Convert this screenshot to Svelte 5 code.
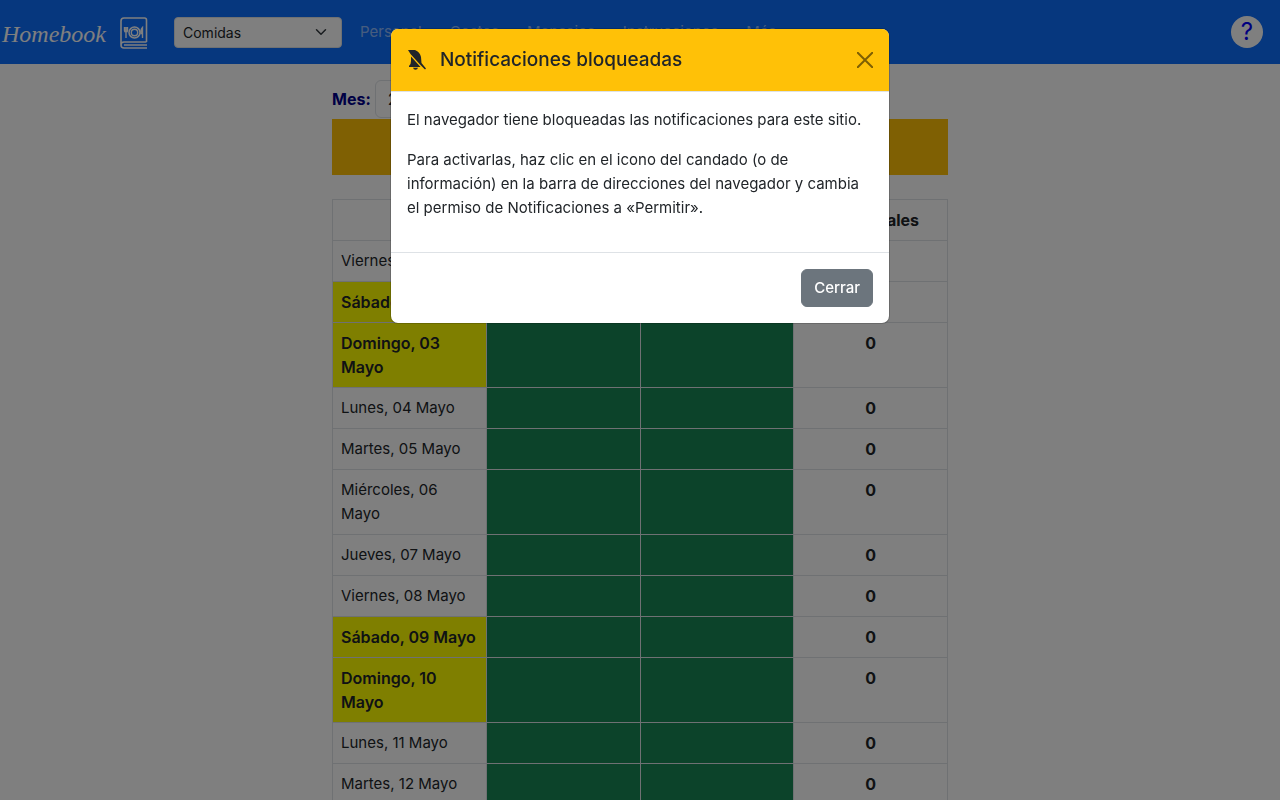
<script>
  const rows = [
    ['Viernes, 01 Mayo', false],
    ['Sábado, 02 Mayo', true],
    ['Domingo, 03 Mayo', true],
    ['Lunes, 04 Mayo', false],
    ['Martes, 05 Mayo', false],
    ['Miércoles, 06 Mayo', false],
    ['Jueves, 07 Mayo', false],
    ['Viernes, 08 Mayo', false],
    ['Sábado, 09 Mayo', true],
    ['Domingo, 10 Mayo', true],
    ['Lunes, 11 Mayo', false],
    ['Martes, 12 Mayo', false],
  ];
  const links = ['Personal', 'Costes', 'Mensajes', 'Instrucciones', 'Más'];
  let open = $state(true);
</script>

<header class="navbar">
  <a class="brand" href="#inicio">
    <span>Homebook</span>
    <svg viewBox="0 0 28 32" width="28" height="32" fill="none" stroke="#fff" aria-hidden="true">
      <path d="M26.500 25V3q0-2-2-2H4Q1 1 1 4v24q0 3 3 3h23M26.500 25H4q-3 0-3 3M4 28h23" stroke-width="1.6" />
      <circle cx="14.500" cy="15.500" r="5.500" stroke-width="1.500" />
      <circle cx="14.500" cy="15.500" r="3.200" stroke-width="1.400" />
      <path d="M4.500 10v3.500q0 1.500 1.500 1.500t1.500-1.500V10M6 10v11M22.500 21V10.500q-2 2-1.500 6h1.500" stroke-width="1.400" />
    </svg>
  </a>
  <select class="section" aria-label="Sección">
    <option>Comidas</option>
  </select>
  <nav>
    {#each links as link}
      <a href="#menu">{link}</a>
    {/each}
  </nav>
  <button class="help" aria-label="Ayuda">?</button>
</header>

<main>
  <div class="month">
    <label for="mes">Mes:</label>
    <input id="mes" type="text" value="2026-05" />
  </div>
  <div class="notice"></div>
  <table>
    <thead>
      <tr><th>Día</th><th>Comida</th><th>Cena</th><th>Comensales</th></tr>
    </thead>
    <tbody>
      {#each rows as [day, weekend]}
        <tr>
          <td class:weekend>{day}</td>
          <td class="free"></td>
          <td class="free"></td>
          <td class="total">0</td>
        </tr>
      {/each}
    </tbody>
  </table>
</main>

{#if open}
  <div class="backdrop">
    <div class="modal" role="dialog" aria-modal="true" aria-labelledby="titulo">
      <div class="modal-head">
        <svg viewBox="0 0 20 20" width="20" height="20" fill="#212529" aria-hidden="true">
          <path d="M1 0h7q5 2 6 7l.5 6 4.500 5.500-1 1L13 14.500 3.500 4z" />
          <path d="M4 6.500l9.500 10.500H2v-1q2-1.500 2-5zM6 17.800h5q-.5 2-2.500 2T6 17.800z" />
        </svg>
        <h5 id="titulo">Notificaciones bloqueadas</h5>
        <button class="close" aria-label="Cerrar aviso" onclick={() => (open = false)}>
          <svg viewBox="0 0 16 16" width="16" height="16" aria-hidden="true">
            <path d="M.7.7l14.600 14.600M15.300.7L.7 15.300" stroke="#000" stroke-width="2" stroke-linecap="round" />
          </svg>
        </button>
      </div>
      <div class="modal-body">
        <p>El navegador tiene bloqueadas las notificaciones para este sitio.</p>
        <p>Para activarlas, haz clic en el icono del candado (o de información) en la barra de direcciones del navegador y cambia el permiso de Notificaciones a «Permitir».</p>
      </div>
      <div class="modal-foot">
        <button class="btn" onclick={() => (open = false)}>Cerrar</button>
      </div>
    </div>
  </div>
{/if}

<style>
  :global(body) {
    overflow: hidden;
    color: #212529;
    font: 15px/24px Inter, "Liberation Sans", sans-serif;
  }
  :global(*) { box-sizing: border-box; }
  .navbar {
    display: flex;
    align-items: center;
    height: 64px;
    padding-right: 17px;
    background: #0d6efd;
  }
  .brand {
    display: flex;
    align-items: center;
    justify-content: space-between;
    width: 148px;
    padding-left: 2px;
    margin-right: 26px;
    color: #fff;
    font: italic 24px/32px "Liberation Serif", serif;
    text-decoration: none;
  }
  .brand span { padding-top: 4px; }
  .brand svg { margin-top: 2px; }
  .section {
    appearance: none;
    width: 168px;
    height: 31px;
    padding: 0 8px;
    border: 1px solid #dee2e6;
    border-radius: 4px;
    color: #212529;
    font: 14px/21px Inter, sans-serif;
    background: #fff url("data:image/svg+xml,%3Csvg xmlns='http://www.w3.org/2000/svg' viewBox='0 0 16 16'%3E%3Cpath fill='none' stroke='%23343a40' stroke-linecap='round' stroke-linejoin='round' stroke-width='2' d='m2 5 6 6 6-6'/%3E%3C/svg%3E") no-repeat right 14px center / 12px 12px;
  }
  nav { display: flex; gap: 28px; margin: 0 auto 0 18px; }
  nav a { color: rgba(255, 255, 255, 0.55); text-decoration: none; }
  .help {
    width: 32px;
    height: 32px;
    padding: 0;
    border: 0;
    border-radius: 50%;
    background: #fff;
    color: #0000ff;
    font: 24px/32px Inter, sans-serif;
  }
  main { width: 616px; max-width: 100%; margin: 16px auto 0; }
  .month { display: flex; align-items: center; gap: 4px; color: #00008b; font-size: 16px; font-weight: 700; }
  .month input {
    width: 180px;
    height: 38px;
    padding: 6px 12px;
    border: 1px solid #dee2e6;
    border-radius: 6px;
    color: #212529;
    font: inherit;
    font-weight: 400;
  }
  .notice { height: 56px; margin: 1px 0 24px; background: #ffc107; }
  table { width: 100%; table-layout: fixed; border-collapse: collapse; }
  th, td { padding: 8px; border: 1px solid #dee2e6; vertical-align: top; }
  th { text-align: center; font-size: 16px; }
  .weekend { background: #ff0; font-size: 16px; font-weight: 600; }
  .free { background: #198754; }
  .total { text-align: center; font-size: 16px; font-weight: 700; }
  .backdrop { position: fixed; inset: 0; background: rgba(0, 0, 0, 0.5); }
  .modal {
    width: 500px;
    max-width: 100%;
    margin: 28px auto;
    border: 1px solid rgba(0, 0, 0, 0.175);
    border-radius: 8px;
    background: #fff;
    background-clip: padding-box;
    overflow: hidden;
  }
  .modal-head {
    display: flex;
    align-items: center;
    padding: 16px;
    border-bottom: 1px solid #dee2e6;
    background: #ffc107;
  }
  h5 { margin: 0 auto 0 13px; font-size: 19px; line-height: 30px; font-weight: 500; }
  .close { display: flex; padding: 0; border: 0; background: none; opacity: 0.5; }
  .modal-body { padding: 16px; }
  p { margin: 0 0 16px; }
  .modal-foot {
    display: flex;
    justify-content: flex-end;
    padding: 16px;
    border-top: 1px solid #dee2e6;
  }
  .btn {
    padding: 6px 12px;
    border: 1px solid #6c757d;
    border-radius: 6px;
    background: #6c757d;
    color: #fff;
    font: inherit;
    font-weight: 500;
  }
</style>
